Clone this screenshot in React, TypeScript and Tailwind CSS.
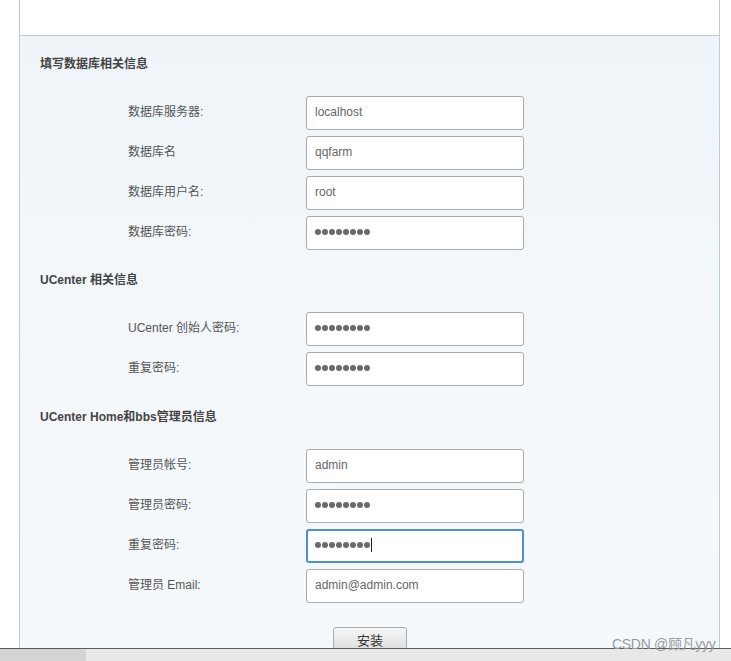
const font = "font-['Liberation_Sans','Noto_Sans_CJK_SC',sans-serif]";

type Row = { label: string; value: string; password?: boolean; focused?: boolean };

const sections: { title: string; gap: string; rows: Row[] }[] = [
  {
    title: "填写数据库相关信息",
    gap: "",
    rows: [
      { label: "数据库服务器:", value: "localhost" },
      { label: "数据库名", value: "qqfarm" },
      { label: "数据库用户名:", value: "root" },
      { label: "数据库密码:", value: "12345678", password: true },
    ],
  },
  {
    title: "UCenter 相关信息",
    gap: "mt-[20px]",
    rows: [
      { label: "UCenter 创始人密码:", value: "12345678", password: true },
      { label: "重复密码:", value: "12345678", password: true },
    ],
  },
  {
    title: "UCenter Home和bbs管理员信息",
    gap: "mt-[21px]",
    rows: [
      { label: "管理员帐号:", value: "admin" },
      { label: "管理员密码:", value: "12345678", password: true },
      { label: "重复密码:", value: "12345678", password: true, focused: true },
      { label: "管理员 Email:", value: "admin@admin.com" },
    ],
  },
];

const Dots = () => (
  <span className="flex gap-[1px]">
    {[0, 1, 2, 3, 4, 5, 6, 7].map((d) => (
      <span key={d} className="w-[6px] h-[6px] rounded-full bg-[#6a6a6a]" />
    ))}
  </span>
);

const Field = ({ row }: { row: Row }) => {
  return (
    <div className="flex items-center h-[34px]">
      <div className="w-[178px] pl-[88px] box-content text-[12px] text-[#555] whitespace-nowrap pb-[2px]">{row.label}</div>
      <div
        className={
          "w-[218px] h-[34px] rounded-[3px] bg-white flex items-center pb-[3px] text-[12px] text-[#666] " +
          (row.focused ? "border-2 border-[#4a90d9] px-[7px]" : "border border-[#aaaaaa] px-[8px]")
        }
      >
        {row.password ? <Dots /> : <span>{row.value}</span>}
        {row.focused && <span className="ml-[1px] w-px h-[14px] bg-[#222]" />}
      </div>
    </div>
  );
};

export default function App() {
  return (
    <div className={"relative w-[731px] h-[661px] bg-white overflow-hidden flex flex-col " + font}>
      <div className="h-[648px] overflow-hidden">
        <div className="ml-[19px] w-[701px] border-x border-[#b4cfdc]">
          <div className="h-[36px] bg-white border-b border-[#b4cfdc]" />
          <div className="bg-gradient-to-b from-[#eef4f8] via-[#f4f8fb] to-[#f5f9fc] px-[20px] pt-[18px] pb-[40px]">
            {sections.map((s) => (
              <div key={s.title} className={s.gap}>
                <div className="h-[20px] leading-[20px] text-[12px] font-bold text-[#444] mb-[22px]">{s.title}</div>
                <div className="flex flex-col gap-[6px]">
                  {s.rows.map((r, j) => (
                    <Field key={j} row={r} />
                  ))}
                </div>
              </div>
            ))}
            <div className="flex justify-center mt-[24px] pl-[1px]">
              <button className="w-[74px] h-[26px] rounded-[3px] border border-[#aaaaaa] bg-gradient-to-b from-[#f6f6f6] to-[#dcdcdc] text-[13px] text-[#333] pt-[1px]">
                安装
              </button>
            </div>
          </div>
        </div>
      </div>
      <div className="h-[13px] border-t border-[#5a5a5a] bg-[#e8e8e8] flex">
        <div className="w-[86px] h-full bg-[#d4d4d4] rounded-tr-[3px]" />
      </div>
      <div className="absolute left-[612px] top-[634px] text-[14px] tracking-[-0.3px] text-[#9a9a9a] whitespace-nowrap">CSDN @顾凡yyy</div>
    </div>
  );
}
